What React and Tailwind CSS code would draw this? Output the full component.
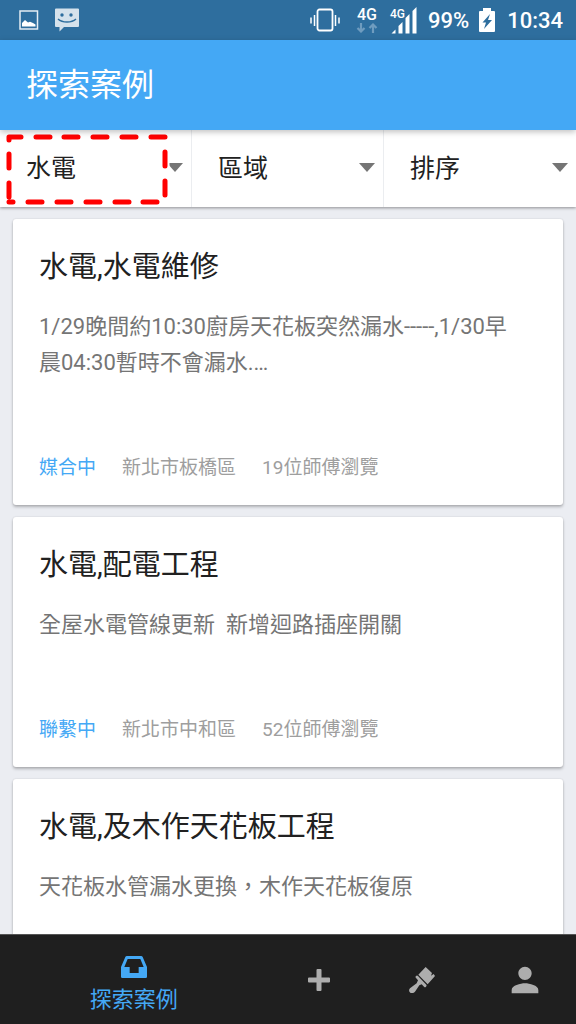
/**
 * Case explorer screen
 * Lists the open repair cases with filters and a bottom navigation
 */

import React, { useState } from 'react';
import { MdPerson } from 'react-icons/md';

const filters = [
  { id: 'category', label: '水電', options: ['水電', '木作', '油漆'], marked: true },
  { id: 'area', label: '區域', options: ['區域', '板橋區', '中和區'] },
  { id: 'sort', label: '排序', options: ['排序', '最新', '最多瀏覽'] },
];

const cases = [
  {
    id: 1,
    title: '水電,水電維修',
    description: '1/29晚間約10:30廚房天花板突然漏水-----,1/30早晨04:30暫時不會漏水.…',
    status: '媒合中',
    area: '新北市板橋區',
    views: '19位師傅瀏覽',
  },
  {
    id: 2,
    title: '水電,配電工程',
    description: '全屋水電管線更新  新增迴路插座開關',
    status: '聯繫中',
    area: '新北市中和區',
    views: '52位師傅瀏覽',
  },
  {
    id: 3,
    title: '水電,及木作天花板工程',
    description: '天花板水管漏水更換，木作天花板復原',
  },
];

// Dashes of the highlight frame, drawn twice: white halo, then red
const framePath =
  'M9 10 V7 H21 M36 7 H50 M64 7 H78 M93 7 H107 M122 7 H136 M151 7 H165 ' +
  'M165 22 V36 M165 51 V65 M9 24 V38 M9 53 V67 ' +
  'M9 72 H13 M28 72 H42 M57 72 H71 M86 72 H100 M115 72 H129 M143 72 H157';

const StatusBar = () => (
  <div className="flex h-10 shrink-0 items-center justify-between bg-[#2e6e9e] pr-[13px] pl-[19px] text-white">
    <div className="flex items-center gap-4">
      <svg className="h-5 w-5" viewBox="0 0 20 20" fill="none">
        <rect x="1" y="1" width="17.5" height="18" stroke="#e4edf4" strokeWidth="1.5" />
        <path d="M3 16.500V13L6 10l3 2.500 2-.8 3 1.300 2.500 1.500v2z" fill="#fff" />
      </svg>
      <svg className="h-6 w-6" viewBox="0 0 24 24">
        <path d="M1 0.500h22a1 1 0 0 1 1 1V18a1 1 0 0 1-1 1H9l-4.500 4.500V19H1a1 1 0 0 1-1-1V1.500a1 1 0 0 1 1-1z" fill="#d5e2ec" />
        <circle cx="7" cy="7" r="1.700" fill="#2e6e9e" />
        <circle cx="16" cy="7" r="1.700" fill="#2e6e9e" />
        <path d="M3 11c4.500 4 13.500 4 18 0" fill="none" stroke="#2e6e9e" strokeWidth="1.500" />
      </svg>
    </div>
    <div className="flex items-center text-[22px] font-medium">
      <svg className="mr-4 h-6 w-[30px]" viewBox="0 0 30 24" fill="none" stroke="#fff">
        <rect x="7.500" y="1.500" width="15" height="21" rx="2" strokeWidth="1.800" />
        <path d="M4.500 7v11M25.500 7v11" strokeWidth="1.500" />
        <path d="M1 9.500v6M29 9.500v6" strokeWidth="1.500" />
      </svg>
      <div className="mr-3 flex flex-col items-center">
        <span className="text-base leading-4">4G</span>
        <svg className="h-[10px] w-[22px]" viewBox="0 0 22 10" fill="none" stroke="#6f9cbf" strokeWidth="2.2">
          <path d="M5 0v8M1.500 5L5 8.500 8.500 5M17 10V2M13.500 5L17 1.500 20.500 5" />
        </svg>
      </div>
      <div className="relative mr-2.5 h-7 w-7">
        <svg className="h-7 w-7" viewBox="0 0 28 28" fill="#fff">
          <path d="M1.500 27.500L5.500 23.500v4zM8.500 27.500V20l4-4v11.500zM15.500 27.500V12l4-4v19.500zM22.500 27.500V5l4-4v26.500z" />
        </svg>
        <span className="absolute top-0.5 left-0 bg-[#2e6e9e] text-xs leading-3">4G</span>
      </div>
      <span className="mr-2.5">99%</span>
      <svg className="mr-3 h-6 w-4" viewBox="0 0 16 24">
        <path d="M4 0h8v3h3a1 1 0 0 1 1 1v19a1 1 0 0 1-1 1H1a1 1 0 0 1-1-1V4a1 1 0 0 1 1-1h3z" fill="#fff" />
        <path d="M11 6L3.500 14.500H7L5 21l8-9H9z" fill="#2e6e9e" />
      </svg>
      <span>10:34</span>
    </div>
  </div>
);

const FilterSelect = ({ filter }) => {
  const [value, setValue] = useState(filter.label);

  return (
    <div className="relative border-r border-[#ebedf0] last:border-r-0">
      <select
        aria-label={filter.label}
        value={value}
        onChange={(e) => setValue(e.target.value)}
        className="h-full w-full appearance-none bg-transparent pl-[26px] text-[25px] text-[#212121] outline-none"
      >
        {filter.options.map((option) => (
          <option key={option} value={option}>{option}</option>
        ))}
      </select>
      <svg className="pointer-events-none absolute top-[33px] right-2 h-[9px] w-4" viewBox="0 0 16 9" fill="#757575">
        <path d="M0 0h16L8 9z" />
      </svg>
      {filter.marked && (
        <svg className="pointer-events-none absolute top-0 left-0 h-[78px] w-[172px]" viewBox="0 0 172 78" fill="none" strokeLinecap="round" strokeLinejoin="round">
          <path d={framePath} stroke="#fff" strokeWidth="9" />
          <path d={framePath} stroke="#f00" strokeWidth="5" />
        </svg>
      )}
    </div>
  );
};

const CaseCard = ({ item }) => (
  <article className="min-h-[250px] shrink-0 rounded-[3px] bg-white px-[26px] pt-[26px] pb-6 shadow-[0_2px_3px_rgba(0,0,0,0.25),0_0_2px_rgba(0,0,0,0.12)]">
    <h2 className="text-[29px] leading-11 text-[#212121]">{item.title}</h2>
    <p className="mt-5 pr-3 text-[22px] leading-9 whitespace-pre-wrap text-[#757575]">{item.description}</p>
    {item.status && (
      <div className="mt-[74px] flex gap-[26px] text-[19px] leading-[26px] text-[#9e9e9e]">
        <span className="text-[#44a8f5]">{item.status}</span>
        <span>{item.area}</span>
        <span>{item.views}</span>
      </div>
    )}
  </article>
);

const BottomNav = () => (
  <nav className="grid h-[90px] shrink-0 grid-cols-[26fr_10fr_10fr_10fr] border-t border-[#555] bg-[#1f1f1f] text-[#adadad]">
    <button type="button" className="flex flex-col items-center justify-center gap-1.5 pt-3 text-[#44a8f5]">
      <svg className="h-[22px] w-[26px]" viewBox="0 0 78 66" fill="currentColor">
        <path fillRule="evenodd" d="M18 0h42q4 0 5 3l13 30v29q0 4-4 4H4q-4 0-4-4V33L13 3q1-3 5-3zM20 9L10 33h16v18h27V33h15L58 9z" />
      </svg>
      <span className="text-[22px] leading-8">探索案例</span>
    </button>
    <button type="button" aria-label="新增" className="flex items-center justify-center">
      <svg className="h-[22px] w-[22px]" viewBox="0 0 22 22" fill="currentColor">
        <path d="M8.500 1q0-1 1-1h3q1 0 1 1v7.500H21q1 0 1 1v3q0 1-1 1h-7.500V21q0 1-1 1h-3q-1 0-1-1v-7.500H1q-1 0-1-1v-3q0-1 1-1h7.500z" />
      </svg>
    </button>
    <button type="button" aria-label="工程" className="flex items-center justify-center">
      <svg className="h-[26px] w-[26px]" viewBox="358 108 78 78" fill="currentColor">
        <path d="M408 108l19 18-3 8 8-5 4 6-22 25-28-29z" />
        <path d="M379 135q3-3 6 0l25 26q2 3-1 6-3 3-6 0l-7-7-7 3-13 19q-6 7-14 3-7-6-1-13l20-15 4-9-6-7q-3-3 0-6z" />
      </svg>
    </button>
    <button type="button" aria-label="個人" className="flex items-center justify-center">
      <MdPerson size={40} />
    </button>
  </nav>
);

const App = () => {
  return (
    <div className="flex h-screen flex-col overflow-hidden bg-[#ebedf2] font-[Roboto,'Noto_Sans_CJK_TC',sans-serif]">
      <StatusBar />

      {/* App bar */}
      <header className="z-10 flex h-[90px] shrink-0 items-center bg-[#44a8f5] px-[26px] shadow-[0_2px_6px_rgba(0,0,0,0.25)]">
        <h1 className="text-[32px] leading-10 text-white">探索案例</h1>
      </header>

      {/* Filters */}
      <div className="grid h-[77px] shrink-0 grid-cols-3 bg-white shadow-[0_1px_3px_rgba(0,0,0,0.4)]">
        {filters.map((filter) => (
          <FilterSelect key={filter.id} filter={filter} />
        ))}
      </div>

      {/* Case list */}
      <main className="flex min-h-0 flex-1 flex-col gap-3 overflow-hidden px-[13px] pt-3">
        {cases.map((item) => (
          <CaseCard key={item.id} item={item} />
        ))}
      </main>

      <BottomNav />
    </div>
  );
};

export default App;
